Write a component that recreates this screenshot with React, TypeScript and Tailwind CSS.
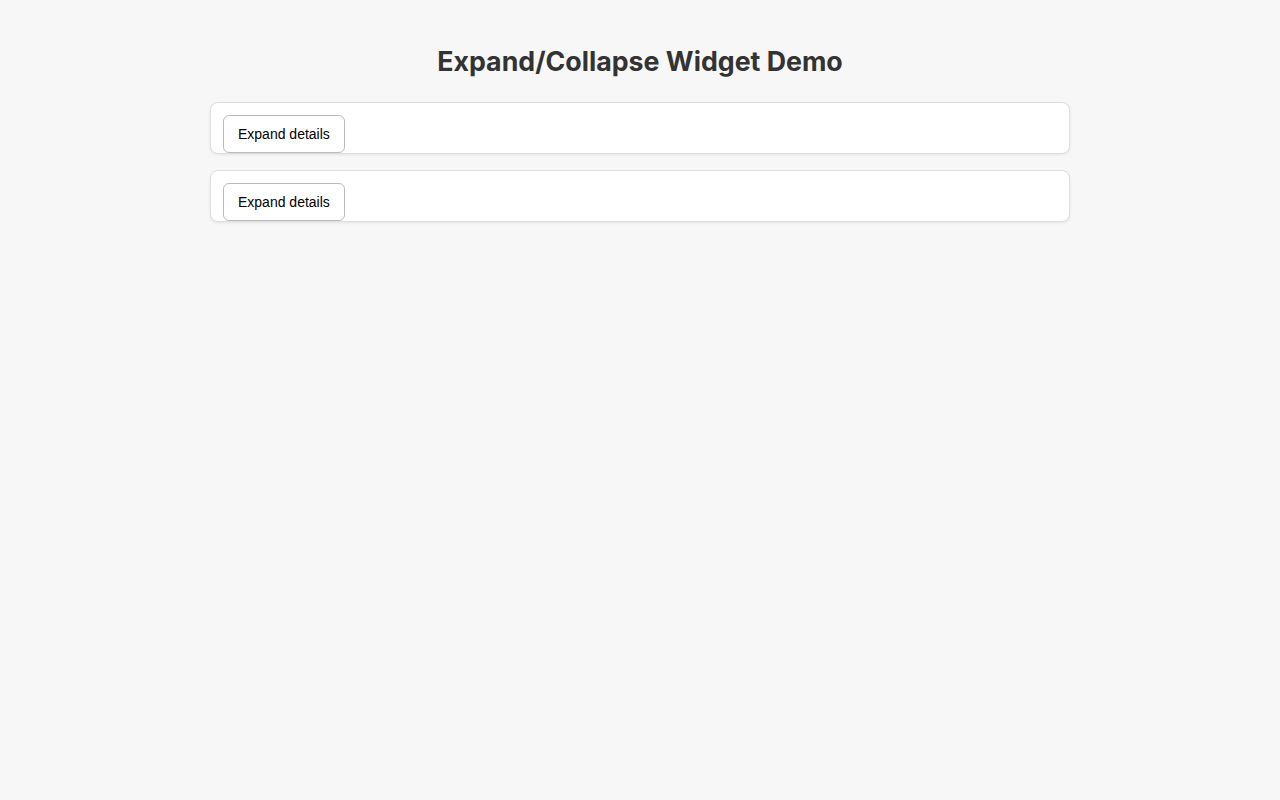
import { useState } from 'react';

const items = [
  { id: 1, details: 'Here are some hidden details for the first item. They show up once the panel is expanded.' },
  { id: 2, details: 'More hidden details for the second item, revealed when you expand the panel.' },
];

function Panel({ details }: { details: string }) {
  const [open, setOpen] = useState(false);

  return (
    <div
      className={`bg-white border border-[#dddddd] rounded-lg p-3 shadow-[0_1px_3px_rgba(0,0,0,0.08)] overflow-hidden ${
        open ? '' : 'max-h-[52px]'
      }`}
    >
      <button
        type="button"
        onClick={() => setOpen(!open)}
        className="h-[38px] px-[14px] border border-[#bbbbbb] rounded-md bg-white text-sm text-black cursor-pointer"
        style={{ fontFamily: '"Liberation Sans", Arial, sans-serif' }}
      >
        {open ? 'Collapse details' : 'Expand details'}
      </button>
      {open && <p className="mt-3 text-sm text-[#444]">{details}</p>}
    </div>
  );
}

export default function App() {
  return (
    <div className="min-h-screen bg-[#f7f7f7] pt-[43px]" style={{ fontFamily: 'Inter, sans-serif' }}>
      <h1 className="text-center text-[26.75px] font-bold text-[#333333] leading-9">Expand/Collapse Widget Demo</h1>
      <div className="w-[860px] mx-auto mt-[23px] flex flex-col gap-4">
        {items.map((item) => (
          <Panel key={item.id} details={item.details} />
        ))}
      </div>
    </div>
  );
}
